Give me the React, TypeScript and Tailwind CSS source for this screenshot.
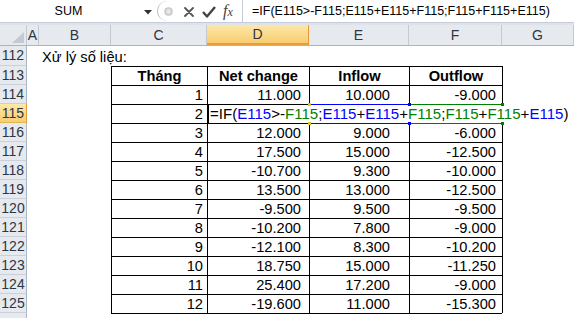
import React from "react";

const W = [27, 12, 72, 96, 102, 100, 93, 72];

const BLUE = "text-[#0000ff]";
const GREEN = "text-[#008000]";

function Formula({ colored }: { colored: boolean }) {
  const segs: [string, string][] = [
    ["=IF(", ""],
    ["E115", "b"],
    [">-", ""],
    ["F115", "g"],
    [";", ""],
    ["E115", "b"],
    ["+", ""],
    ["E115", "b"],
    ["+", ""],
    ["F115", "g"],
    [";", ""],
    ["F115", "g"],
    ["+", ""],
    ["F115", "g"],
    ["+", ""],
    ["E115", "b"],
    [")", ""],
  ];
  return (
    <>
      {segs.map(([t, c], i) => (
        <span
          key={i}
          className={colored ? (c === "b" ? BLUE : c === "g" ? GREEN : "text-black") : "text-black"}
        >
          {t}
        </span>
      ))}
    </>
  );
}

const data: [string, string, string, string][] = [
  ["1", "11.000", "10.000", "-9.000"],
  ["2", "", "", ""],
  ["3", "12.000", "9.000", "-6.000"],
  ["4", "17.500", "15.000", "-12.500"],
  ["5", "-10.700", "9.300", "-10.000"],
  ["6", "13.500", "13.000", "-12.500"],
  ["7", "-9.500", "9.500", "-9.500"],
  ["8", "-10.200", "7.800", "-9.000"],
  ["9", "-12.100", "8.300", "-10.200"],
  ["10", "18.750", "15.000", "-11.250"],
  ["11", "25.400", "17.200", "-9.000"],
  ["12", "-19.600", "11.000", "-15.300"],
];

function RowHdr({ n, hl }: { n?: number; hl?: boolean }) {
  return (
    <div
      className={
        "w-[27px] shrink-0 flex items-center justify-center text-[14px] font-normal text-[#2c3644] border-b border-r " +
        (hl
          ? "bg-linear-to-b from-[#fde8a8] to-[#f8cd70] border-b-[#e3b55a] border-r-[#e49a38]"
          : "bg-[#e6eaef] border-b-[#c9d0d9] border-r-[#a9b6c6]")
      }
    >
      {n}
    </div>
  );
}

function Handles() {
  return (
    <>
      <div className="absolute z-20 left-[308px] top-[-1px] w-[3px] h-[3px] bg-[#d8c428]" />
      <div className="absolute z-20 left-[408px] top-[-1px] w-[3px] h-[3px] bg-[#0000ff]" />
      <div className="absolute z-20 left-[501px] top-[-1px] w-[3px] h-[3px] bg-[#008000]" />
    </>
  );
}

export default function App() {
  return (
    <div className="w-[574px] h-[318px] overflow-hidden bg-white font-['Liberation_Sans',Arial,sans-serif] text-black select-none">
      {/* Formula bar */}
      <div className="flex h-[23px] border-b border-[#c5ccd5] bg-white">
        <div className="relative w-[155px] shrink-0 flex items-center">
          <span className="w-[137px] text-center text-[12.5px] leading-none">SUM</span>
          <svg className="absolute left-[144px] top-[10px]" width="9" height="5" viewBox="0 0 9 5">
            <polygon points="0,0 8,0 4,4.5" fill="#333" />
          </svg>
        </div>
        <div className="relative w-[87px] shrink-0">
          <div className="absolute left-[2px] top-[1px] h-[20px] w-[22px] rounded-l-full border-l border-[#b3bcc8]" />
          <div className="absolute left-[9px] top-[7px] h-[9px] w-[9px] rounded-full bg-radial from-[#f4f4f4] to-[#bdbdbd] border border-[#c8c8c8]" />
          <svg className="absolute left-[29px] top-[7px]" width="10" height="10" viewBox="0 0 10 10">
            <path d="M1 1 L9 9 M9 1 L1 9" stroke="#555" strokeWidth="1.8" strokeLinecap="round" />
          </svg>
          <svg className="absolute left-[47px] top-[6px]" width="14" height="12" viewBox="0 0 14 12">
            <path d="M1 6 L5 10.5 L13 1" stroke="#444" strokeWidth="2.4" fill="none" strokeLinejoin="round" />
          </svg>
          <span className="absolute left-[68px] top-[3px] text-[16px] leading-none italic text-[#444] font-['Liberation_Serif',serif]">
            f<span className="text-[12px]">x</span>
          </span>
        </div>
        <div className="flex-1 border-l border-[#c5ccd5] pl-[9px] flex items-center text-[12.5px] whitespace-nowrap overflow-hidden">
          <Formula colored={false} />
        </div>
      </div>
      <div className="h-[2px] bg-[#dfe3e9]" />

      {/* Column headers */}
      <div className="flex h-[21px] bg-[#e6eaef] border-b border-[#aab6c5] text-[14px] text-[#2c3644]">
        <div className="relative w-[27px] shrink-0 border-r border-[#c3cad4]">
          <svg className="absolute left-[12px] top-[7px]" width="13" height="12" viewBox="0 0 13 12">
            <polygon points="12,0 12,11 0,11" fill="#c4cad3" />
          </svg>
        </div>
        {["A", "B", "C", "D", "E", "F", "G"].map((c, i) => (
          <div
            key={c}
            style={{ width: W[i + 1] }}
            className={
              "shrink-0 flex items-center justify-center border-r " +
              (c === "D"
                ? "bg-linear-to-b from-[#fde8a8] to-[#f8cd70] border-r-[#e49a38] border-b-2 border-b-[#ee9c3a]"
                : "border-[#c3cad4]")
            }
          >
            {c}
          </div>
        ))}
      </div>

      {/* Row 112 */}
      <div className="flex h-[20px] text-[14.67px]">
        <RowHdr n={112} />
        <div className="w-[12px] shrink-0" />
        <div className="flex-1 flex items-center pl-[3px] pt-[1px] whitespace-nowrap">Xử lý số liệu:</div>
      </div>

      {/* Row 113 header */}
      <div className="flex h-[19px] text-[14.67px]">
        <RowHdr n={113} />
        <div className="w-[12px] shrink-0" />
        <div className="w-[72px] shrink-0" />
        <div className="w-[96px] shrink-0 border-l border-t border-black flex items-center justify-center font-bold">Tháng</div>
        <div className="w-[102px] shrink-0 border-l border-t border-black flex items-center justify-center font-bold">Net change</div>
        <div className="w-[100px] shrink-0 border-l border-t border-black flex items-center justify-center font-bold">Inflow</div>
        <div className="w-[93px] shrink-0 border-l border-t border-black flex items-center justify-center font-bold">Outflow</div>
        <div className="w-[72px] shrink-0 border-l border-black" />
      </div>

      {data.map((r, idx) => {
        const n = 114 + idx;
        if (n === 115) {
          return (
            <div key={n} className="relative flex h-[19px] text-[14.67px]">
              <RowHdr n={n} hl />
              <div className="w-[12px] shrink-0" />
              <div className="w-[72px] shrink-0" />
              <div className="w-[96px] shrink-0 border-l border-t border-black flex items-center justify-end pr-[4px]">
                {r[0]}
              </div>
              <div className="relative z-10 w-[102px] shrink-0 border-t border-t-black border-l-2 border-l-black bg-white flex items-center pl-[1px] text-[15.05px] whitespace-nowrap overflow-visible">
                <Formula colored />
              </div>
              <div className="w-[100px] shrink-0 border-t border-[#0000ff] bg-white" />
              <div className="w-[93px] shrink-0 border-t border-[#008000] bg-white" />
              <div className="w-[72px] shrink-0 bg-white" />
              <Handles />
            </div>
          );
        }
        const after = n === 116;
        return (
          <div key={n} className="relative flex h-[19px] text-[14.67px]">
            <RowHdr n={n} />
            <div className="w-[12px] shrink-0" />
            <div className="w-[72px] shrink-0" />
            <div className="w-[96px] shrink-0 border-l border-t border-black flex items-center justify-end pr-[4px]">
              {r[0]}
            </div>
            <div className="w-[102px] shrink-0 border-l border-t border-black flex items-center justify-end pr-[8px]">
              {r[1]}
            </div>
            <div
              className={
                "w-[100px] shrink-0 border-l border-t border-l-black flex items-center justify-end pr-[19px] " +
                (after ? "border-t-[#0000ff]" : "border-t-black")
              }
            >
              {r[2]}
            </div>
            <div
              className={
                "w-[93px] shrink-0 border-l border-t border-l-black flex items-center justify-end pr-[6px] " +
                (after ? "border-t-[#008000]" : "border-t-black")
              }
            >
              {r[3]}
            </div>
            <div className="w-[72px] shrink-0 border-l border-black" />
            {after && <Handles />}
          </div>
        );
      })}

      {/* Row 126 (sliver) */}
      <div className="flex h-[19px]">
        <RowHdr />
        <div className="w-[12px] shrink-0" />
        <div className="w-[72px] shrink-0" />
        <div className="w-[96px] shrink-0 border-t border-black" />
        <div className="w-[102px] shrink-0 border-t border-black" />
        <div className="w-[100px] shrink-0 border-t border-black" />
        <div className="w-[93px] shrink-0 border-t border-black" />
      </div>
    </div>
  );
}
